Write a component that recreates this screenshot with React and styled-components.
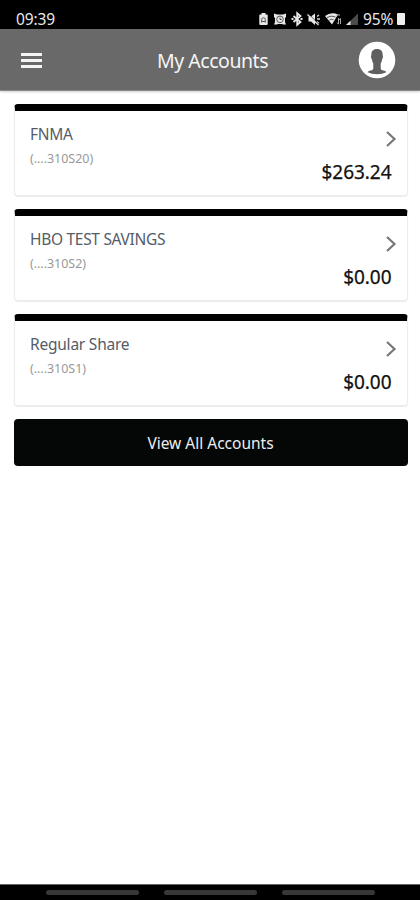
import React from 'react'
import styled, { createGlobalStyle } from 'styled-components'

const accounts = [
  { name: 'FNMA', number: '(....310S20)', balance: '$263.24', spacing: -0.3 },
  {
    name: 'HBO TEST SAVINGS',
    number: '(....310S2)',
    balance: '$0.00',
    spacing: -0.3,
  },
  {
    name: 'Regular Share',
    number: '(....310S1)',
    balance: '$0.00',
    spacing: -0.22,
  },
]

const StatusIcons = () => (
  <svg width="102" height="16" viewBox="0 0 102 16" fill="#e8e8e8">
    {/* battery saver */}
    <path d="M4.500 2h4v1.500H10q.7 0 .7.8V13q0 1-1 1H3.300q-1 0-1-1V4.300q0-.8.8-.8h1.400z" />
    <path
      d="M4.700 11.500V8.500a1.800 1.800 0 0 1 3.600 0v3M4.500 10.500h4"
      fill="none"
      stroke="#555"
      strokeWidth="1"
    />
    {/* alarm */}
    <path d="M17 2.500l3 1h6l3-1v3.500l-1 1v4l1 2.500h-3l-1-.5h-4l-1 .5h-3l1-2.500V7l-1-1z" />
    <circle cx="23" cy="8.300" r="3.300" fill="none" stroke="#555" strokeWidth="1" />
    <path d="M23 6.500v2h1.600" fill="none" stroke="#444" strokeWidth="1" />
    {/* bluetooth */}
    <path
      d="M36.500 5l7 6-3.300 2.800V2.200L43.500 5l-7 6M34.500 8h2M43.500 8h2"
      fill="none"
      stroke="#e8e8e8"
      strokeWidth="1.800"
    />
    {/* muted */}
    <path d="M51.500 5.500H54l4-3v11.500l-4-3.500h-2.500z" />
    <path
      d="M60 5.500l2-1.500M60 8h3M60 10.500l2 2"
      fill="none"
      stroke="#d0d0d0"
      strokeWidth="1.400"
    />
    <path d="M51 2.500l11.500 11.500" stroke="#111" strokeWidth="1" />
    <path d="M50.500 3.500l11 10.500" stroke="#e8e8e8" strokeWidth="1.200" />
    {/* wifi */}
    <path d="M68 5q6-4.500 13-1.500l-6 10z" />
    <path
      d="M70 6.500q4-2.500 8.500-.5M72.500 9q2-1.200 4-.3"
      fill="none"
      stroke="#444"
      strokeWidth=".9"
    />
    <path
      d="M79 4h4M81.500 7v6M80 11.500l1.500 1.800M83.500 13V8M82.300 8.800l1.200-1.500"
      fill="none"
      stroke="#aaa"
      strokeWidth="1"
    />
    {/* signal */}
    <path d="M101 2.500V14H89z" fill="#4b4b4b" />
    <path d="M93.500 9.700V14H89z" />
  </svg>
)

const Avatar = () => (
  <svg width="38" height="38" viewBox="0 0 38 38">
    <circle cx="19" cy="19" r="18.300" fill="#fff" />
    <path
      d="M19 8c-4.200 0-5.800 2.400-5.600 6-.7.500-.5 3.400.5 4.200.3 2.200.8 3.300 1.400 4.200V27c0 1.600-.8 2.200-2.800 2.600-1.700.4-2.500.9-2.900 1.700Q13.500 33.200 19 33.200t9.400-1.900c-.4-.8-1.200-1.300-2.900-1.700-2-.4-2.800-1-2.800-2.600v-4.600c.6-.9 1.100-2 1.400-4.200 1-.8 1.200-3.700.5-4.200.2-3.600-1.400-6-5.600-6z"
      fill="#606060"
    />
  </svg>
)

const AccountCard = ({ account }) => (
  <Card>
    <div>
      <Name $spacing={account.spacing}>{account.name}</Name>
      <Number>{account.number}</Number>
    </div>
    <Side>
      <svg width="12" height="18" viewBox="0 0 12 18">
        <path
          d="M2 2l7.500 7L2 16"
          fill="none"
          stroke="#777"
          strokeWidth="2.200"
        />
      </svg>
      <Balance>{account.balance}</Balance>
    </Side>
  </Card>
)

const App = () => {
  return (
    <Screen>
      <GlobalStyle />
      <StatusBar>
        <Time>09:39</Time>
        <StatusRight>
          <StatusIcons />
          <Percent>95%</Percent>
          <Battery />
        </StatusRight>
      </StatusBar>
      <Header>
        <Menu aria-label="Menu">
          <span />
          <span />
          <span />
        </Menu>
        <Title>My Accounts</Title>
        <Profile aria-label="Profile">
          <Avatar />
        </Profile>
      </Header>
      <Content>
        {accounts.map((account) => (
          <AccountCard key={account.number} account={account} />
        ))}
        <ViewAll>View All Accounts</ViewAll>
      </Content>
      <NavBar>
        <Handle />
        <Handle />
        <Handle />
      </NavBar>
    </Screen>
  )
}

const GlobalStyle = createGlobalStyle`
  * {
    box-sizing: border-box;
  }

  body {
    margin: 0;
    font-family: 'Noto Sans', 'Open Sans', sans-serif;
  }

  svg {
    display: block;
  }

  button {
    border: 0;
    padding: 0;
    background: none;
    font-family: inherit;
  }
`

const Screen = styled.div`
  display: flex;
  flex-direction: column;
  width: 420px;
  height: 900px;
  background: #fff;
  overflow: hidden;
`

const StatusBar = styled.div`
  display: flex;
  justify-content: space-between;
  align-items: center;
  height: 29px;
  padding: 8px 15px 0 16px;
  background: #000;
  color: #e8e8e8;
  line-height: 20px;
`

const Time = styled.span`
  font-size: 15.5px;
  letter-spacing: -0.1px;
`

const StatusRight = styled.div`
  display: flex;
  align-items: center;
`

const Percent = styled.span`
  width: 35px;
  padding-left: 4px;
  font-size: 15.5px;
  letter-spacing: -0.1px;
`

const Battery = styled.span`
  width: 8px;
  height: 12px;
  margin-left: 3px;
  border-radius: 1px;
  background: #eee;
`

const Header = styled.header`
  display: grid;
  grid-template-columns: 60px 1fr 60px;
  align-items: center;
  height: 62px;
  padding-top: 1px;
  background: #696969;
  border-bottom: 1px solid #8b8b8b;
  box-shadow: 0 1px 2px rgba(0, 0, 0, 0.2);
`

const Menu = styled.button`
  display: flex;
  flex-direction: column;
  gap: 3px;
  width: 21px;
  margin-left: 21px;

  span {
    height: 3px;
    background: #f4f4f4;
  }
`

const Title = styled.h1`
  margin: 0;
  padding-left: 5px;
  color: #f5f5f5;
  font-size: 19.5px;
  font-weight: 400;
  letter-spacing: -0.45px;
  text-align: center;
`

const Profile = styled.button`
  width: 38px;
  margin-left: -2px;
`

const Content = styled.main`
  display: flex;
  flex: 1;
  flex-direction: column;
  gap: 13px;
  padding: 13px 12.5px 0 13.5px;
`

const Card = styled.section`
  display: flex;
  justify-content: space-between;
  height: 92px;
  padding: 10px 9.5px 0 15.5px;
  border: 1px solid #ececec;
  border-top: 7px solid #000;
  border-radius: 4px;
  box-shadow: 0 1px 1px rgba(0, 0, 0, 0.08);
`

const Name = styled.h2`
  margin: 1px 0 0;
  color: #555c68;
  font-size: 15.5px;
  font-weight: 400;
  line-height: 24px;
  letter-spacing: ${({ $spacing }) => $spacing}px;
`

const Number = styled.p`
  margin: 2px 0 0;
  color: #999;
  font-size: 12.5px;
  font-weight: 400;
  line-height: 22px;
  letter-spacing: -0.03px;
`

const Side = styled.div`
  display: flex;
  flex-direction: column;
  align-items: flex-end;
  padding-top: 9px;
`

const Balance = styled.strong`
  margin: 12px 5.5px 0 0;
  color: #111;
  font-size: 19px;
  font-weight: 400;
  line-height: 24px;
  letter-spacing: -0.05px;
  -webkit-text-stroke: 0.25px #111;
`

const ViewAll = styled.button`
  height: 47px;
  border-radius: 4px;
  background: #050706;
  color: #eee;
  font-size: 15.5px;
`

const NavBar = styled.div`
  display: flex;
  justify-content: center;
  gap: 25px;
  height: 16px;
  padding-top: 5px;
  border-top: 1px solid #666;
  background: #000;
`

const Handle = styled.span`
  width: 93px;
  height: 5px;
  border-radius: 3px;
  background: #373737;
`

export default App
